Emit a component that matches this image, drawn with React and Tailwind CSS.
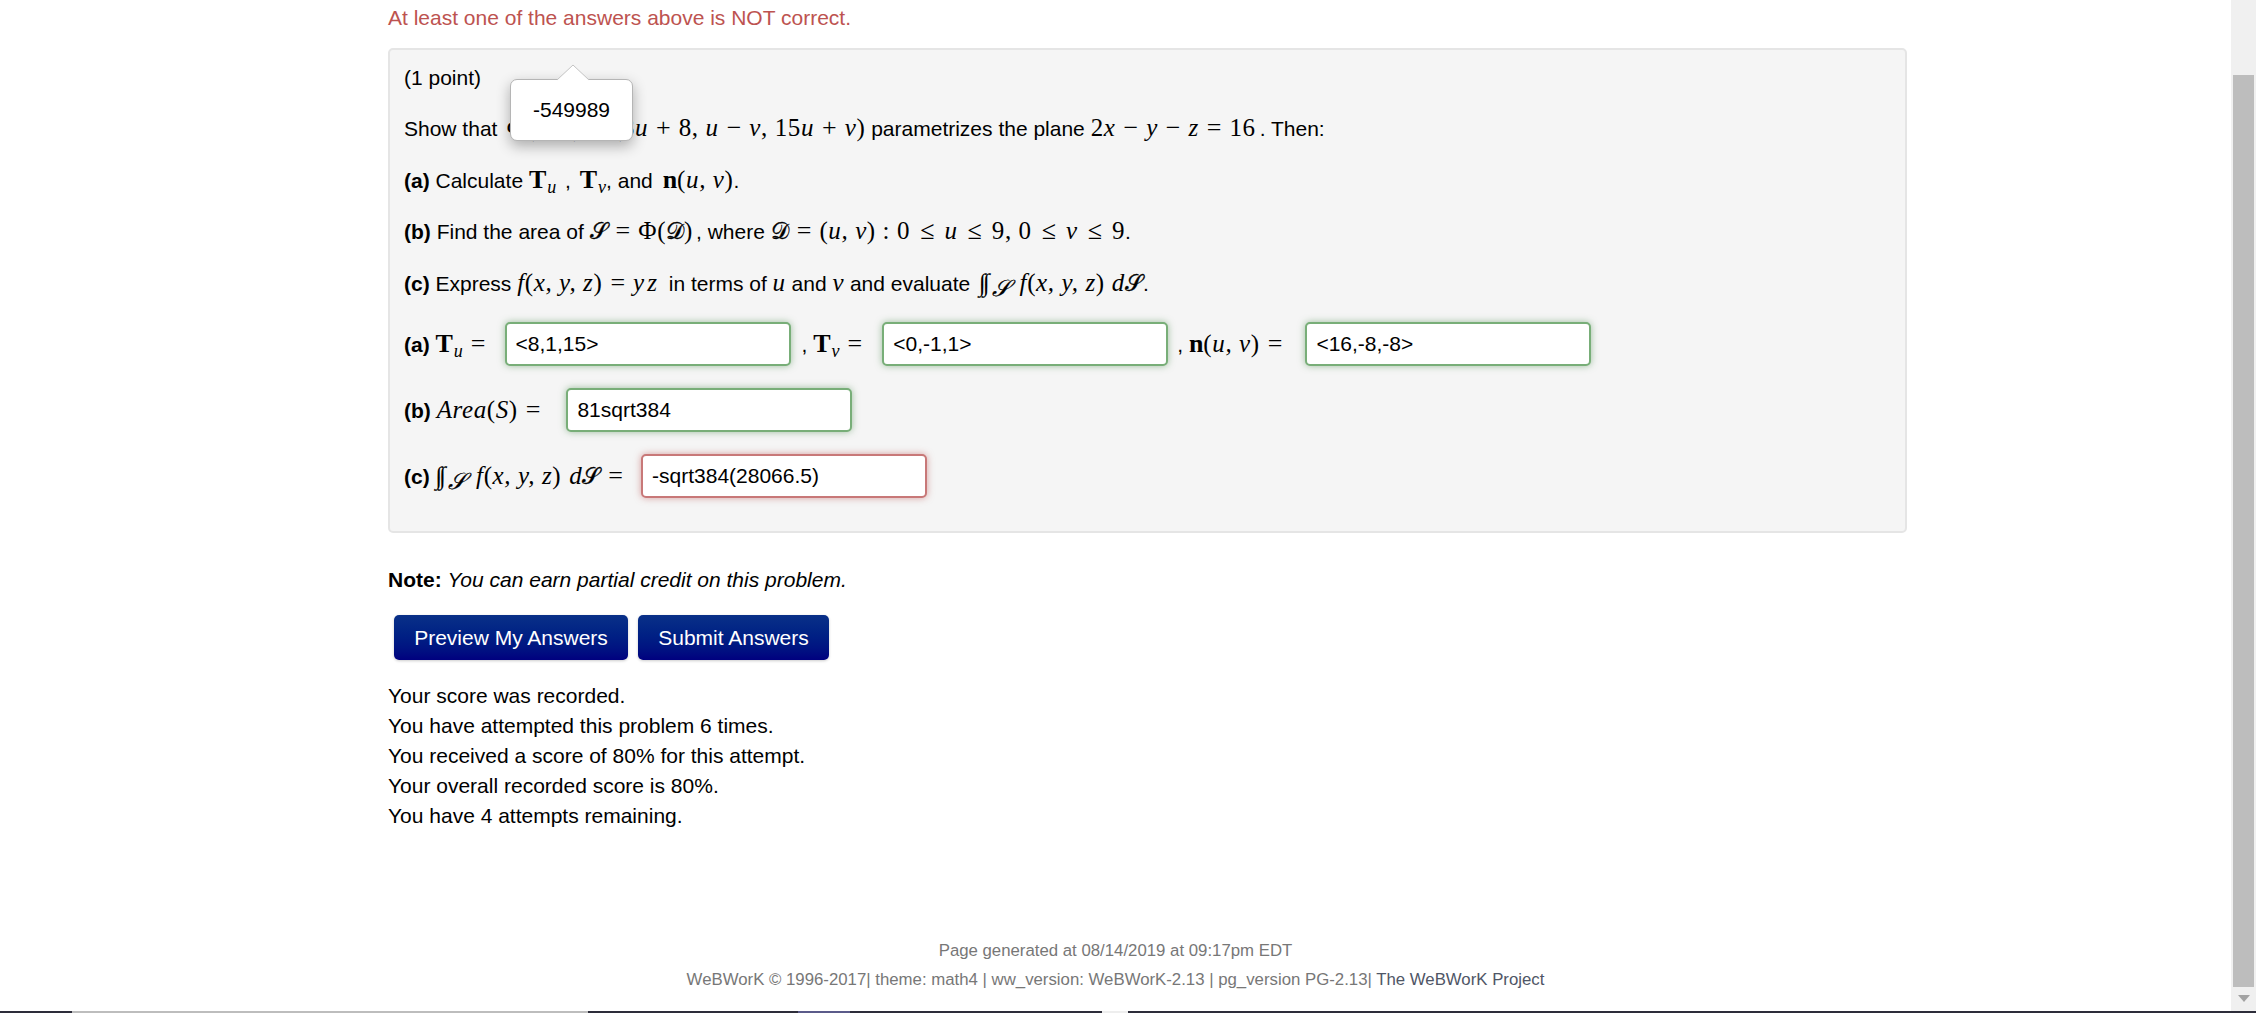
const serif = "font-['Liberation_Serif','DejaVu_Serif',serif]";

// inline math pieces
function I({ children, className = "" }) {
  return <span className={`${serif} italic text-[25px] tracking-[0.6px] ${className}`}>{children}</span>;
}
function R({ children, className = "" }) {
  return <span className={`${serif} text-[25px] tracking-[0.6px] ${className}`}>{children}</span>;
}
function B({ children, className = "" }) {
  return <span className={`${serif} font-bold text-[26px] ${className}`}>{children}</span>;
}
function Sub({ children, className = "" }) {
  return <span className={`${serif} italic text-[18px] relative top-[5px] ml-[1px] ${className}`}>{children}</span>;
}
function Cal({ children }) {
  return <span className="font-['DejaVu_Sans',serif] text-[23px] [-webkit-text-stroke:0.3px_black]">{children}</span>;
}
function Op({ children, className = "mx-[8px]" }) {
  return <span className={`${serif} text-[26px] ${className}`}>{children}</span>;
}

function Row({ children, className = "" }) {
  return <div className={`whitespace-pre ${className}`}>{children}</div>;
}

function Answer({ value, wrong, className = "" }) {
  const tone = wrong
    ? "border-[#c87878] shadow-[0_0_7px_rgba(185,74,72,0.5)]"
    : "border-[#78ae78] shadow-[0_0_7px_rgba(70,136,71,0.5)]";
  return (
    <input
      readOnly
      value={value}
      className={`w-[286px] h-[44px] align-top rounded-[5px] border-2 bg-white px-[9px] text-[21px] text-black outline-none ${tone} ${className}`}
    />
  );
}

function Integral({ className = "" }) {
  return (
    <>
      <span className={`${serif} italic text-[25px] tracking-[-3px] pr-[4px] ${className}`}>∫∫</span>
      <Sub className="mr-[3px]">
        <Cal>𝒮</Cal>
      </Sub>
    </>
  );
}

export default function App() {
  return (
    <div className="flex h-[1013px] w-full overflow-hidden bg-white font-['Liberation_Sans',Arial,sans-serif] text-[21px] text-black relative">
      <div className="flex-1 flex flex-col">
        <div className="ml-[388px] w-[1519px] flex flex-col">
          <p className="h-[36px] leading-[36px] text-[#bd5350]">At least one of the answers above is NOT correct.</p>

          {/* problem panel */}
          <div className="relative mt-[12px] h-[485px] rounded-[5px] border-2 border-[#e5e5e5] bg-[#f5f5f5] pl-[14px] pt-[13px]">
            <Row className="h-[30px] leading-[30px] mb-[20px]">(1 point)</Row>
            <Row className="h-[30px] leading-[30px] mb-[22px]">
              Show that <I className="ml-[3px]">Φ</I>
              <R>(</R><I>u, v</I><R>)</R><Op>=</Op><R>(8</R><I>u</I><Op>+</Op><R>8,</R><I> u</I><Op>−</Op><I>v</I><R>, 15</R><I>u</I><Op>+</Op><I>v</I><R>)</R>
              {" parametrizes the plane "}
              <R>2</R><I>x</I><Op>−</Op><I>y</I><Op>−</Op><I>z</I><Op>=</Op><R className="mr-[4px]">16</R>. Then:
            </Row>
            <Row className="h-[30px] leading-[30px] mb-[21px]">
              <b>(a)</b> Calculate <B>T</B><Sub className="mr-[3px]">u</Sub> , <B className="ml-[3px]">T</B><Sub>v</Sub>, and <B className="ml-[4px]">n</B><R>(</R><I>u, v</I><R>)</R>.
            </Row>
            <Row className="h-[30px] leading-[30px] mb-[22px]">
              <b>(b)</b> Find the area of <Cal>𝒮</Cal><Op>=</Op><R>Φ(</R><Cal>𝒟</Cal><R className="mr-[3px]">)</R>, where <Cal>𝒟</Cal><Op>=</Op><R>(</R><I>u, v</I><R>)</R><R> : 0</R><Op className="mx-[10px]">≤</Op><I>u</I><Op className="mx-[10px]">≤</Op><R>9, 0</R><Op className="mx-[10px]">≤</Op><I>v</I><Op className="mx-[10px]">≤</Op><R>9</R>.
            </Row>
            <Row className="h-[30px] leading-[30px] mb-[24px]">
              <b>(c)</b> Express <I>f</I><R>(</R><I>x, y, z</I><R>)</R><Op>=</Op><span className={`${serif} italic text-[25px] tracking-[3px]`}>yz</span><span className="ml-[3px]"> in terms of </span><I>u</I> and <I>v</I> and evaluate <Integral className="ml-[3px]" /><I> f</I><R>(</R><I>x, y, z</I><R>)</R><I className="ml-[7px]">d</I><Cal>𝒮</Cal>.
            </Row>
            <Row className="h-[44px] leading-[44px] mb-[22px]">
              <b>(a)</b> <B>T</B><Sub>u</Sub><Op>=</Op>
              <Answer value="<8,1,15>" className="ml-[11px]" />
              <span className="ml-[11px]">, </span><B>T</B><Sub>v</Sub><Op>=</Op>
              <Answer value="<0,-1,1>" className="ml-[12px]" />
              <span className="ml-[9px]">, </span><B>n</B><R>(</R><I>u, v</I><R>)</R><Op>=</Op>
              <Answer value="<16,-8,-8>" className="ml-[15px]" />
            </Row>
            <Row className="h-[44px] leading-[44px] mb-[22px]">
              <b>(b)</b> <I>Area</I><R>(</R><I>S</I><R>)</R><Op>=</Op>
              <Answer value="81sqrt384" className="ml-[18px]" />
            </Row>
            <Row className="h-[44px] leading-[44px]">
              <b>(c)</b> <Integral /><I> f</I><R>(</R><I>x, y, z</I><R>)</R><I className="ml-[8px]">d</I><Cal>𝒮</Cal><Op>=</Op>
              <Answer value="-sqrt384(28066.5)" wrong className="ml-[10px]" />
            </Row>

            {/* answer preview popover */}
            <div className="absolute left-[120px] top-[29px] flex h-[62px] w-[123px] items-center justify-center rounded-[7px] border border-[#b5b5b5] bg-white shadow-[0_5px_14px_rgba(0,0,0,0.3)]">
              <svg className="absolute left-[45px] top-[-16px]" width="34" height="17" viewBox="0 0 34 17">
                <path d="M1 16 L17 1 L33 16" fill="#fff" stroke="#c4c4c4" />
              </svg>
              -549989
            </div>
          </div>

          <p className="mt-[32px] h-[30px] leading-[30px]">
            <b>Note:</b> <i>You can earn partial credit on this problem.</i>
          </p>

          <div className="mt-[20px] ml-[6px] flex gap-[10px]">
            <button className="h-[45px] w-[234px] rounded-[5px] bg-gradient-to-b from-[#0a3088] to-[#00007f] text-white shadow-[0_1px_3px_rgba(0,0,0,0.2)]">Preview My Answers</button>
            <button className="h-[45px] w-[191px] rounded-[5px] bg-gradient-to-b from-[#0a3088] to-[#00007f] text-white shadow-[0_1px_3px_rgba(0,0,0,0.2)]">Submit Answers</button>
          </div>

          <div className="mt-[21px] leading-[30px]">
            <p>Your score was recorded.</p>
            <p>You have attempted this problem 6 times.</p>
            <p>You received a score of 80% for this attempt.</p>
            <p>Your overall recorded score is 80%.</p>
            <p>You have 4 attempts remaining.</p>
          </div>
        </div>

        {/* footer */}
        <div className="mt-[105px] text-center text-[16.8px] text-[#777]">
          <p className="h-[29px] leading-[29px]">Page generated at 08/14/2019 at 09:17pm EDT</p>
          <p className="h-[29px] leading-[29px]">
            WeBWorK © 1996-2017| theme: math4 | ww_version: WeBWorK-2.13 | pg_version PG-2.13| <span className="text-[#4f5666]">The WeBWorK Project</span>
          </p>
        </div>
      </div>

      {/* scrollbar */}
      <div className="w-[25px] shrink-0 bg-[#f0f0f0] flex flex-col items-center pt-[75px]">
        <div className="h-[912px] w-[21px] bg-[#bdbdbd]" />
        <svg className="mt-[8px]" width="12" height="7" viewBox="0 0 12 7">
          <path d="M0 0 H12 L6 7 Z" fill="#a3a3a3" />
        </svg>
      </div>

      {/* window strip along the bottom edge */}
      <div className="absolute bottom-0 left-0 right-0 flex h-[2px] bg-[#2d2d3a]">
        <div className="ml-[72px] w-[516px] bg-[#bdbdbd]" />
        <div className="ml-[210px] w-[52px] bg-[#5b5b8a]" />
        <div className="ml-[252px] w-[26px] bg-[#eeeeee]" />
      </div>
    </div>
  );
}
